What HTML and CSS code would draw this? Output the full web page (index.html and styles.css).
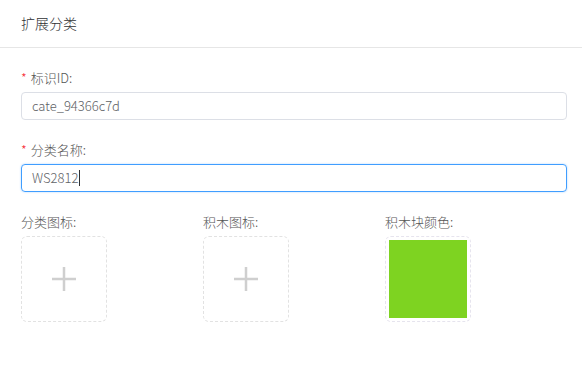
FILE: index.html
```html
<!DOCTYPE html>
<html lang="zh">
<head>
<meta charset="utf-8">
<link rel="stylesheet" href="styles.css">
</head>
<body>
<div class="panel">
  <div class="header">扩展分类</div>
  <div class="form">
    <div class="field">
      <div class="label"><span class="req">*</span>标识ID:</div>
      <div class="input">cate_94366c7d</div>
    </div>
    <div class="field">
      <div class="label"><span class="req">*</span>分类名称:</div>
      <div class="input focus">WS2812<span class="caret"></span></div>
    </div>
    <div class="uploads">
      <div class="col">
        <div class="label">分类图标:</div>
        <div class="box">
          <svg width="24" height="24" viewBox="0 0 24 24"><path d="M12 0v24M0 12h24" stroke="#cfcfcf" stroke-width="2.5" fill="none"/></svg>
        </div>
      </div>
      <div class="col">
        <div class="label">积木图标:</div>
        <div class="box">
          <svg width="24" height="24" viewBox="0 0 24 24"><path d="M12 0v24M0 12h24" stroke="#cfcfcf" stroke-width="2.5" fill="none"/></svg>
        </div>
      </div>
      <div class="col">
        <div class="label">积木块颜色:</div>
        <div class="box color"><div class="swatch"></div></div>
      </div>
    </div>
  </div>
</div>
</body>
</html>
```

FILE: styles.css
```css
* { box-sizing: border-box; }
html, body { margin: 0; padding: 0; background: #fff; }
body {
  font-family: "Noto Sans CJK SC", "Noto Sans", sans-serif;
  color: #606266;
  font-size: 13px;
  font-weight: 300;
}
.header {
  height: 48px;
  line-height: 47px;
  padding-left: 21px;
  font-size: 14px;
  color: #303133;
  border-bottom: 1px solid #e6e6e6;
}
.form {
  padding: 20px 15px 0 21px;
}
.field { margin-bottom: 20px; }
.label {
  height: 20px;
  line-height: 20px;
  margin-bottom: 4px;
  color: #555;
  font-size: 13px;
}
.req {
  color: #f5222d;
  margin-right: 4px;
}
.input {
  height: 28px;
  line-height: 26px;
  border: 1px solid #dcdfe6;
  border-radius: 4px;
  padding: 0 10px;
  color: #606266;
  display: flex;
  align-items: center;
}
.input.focus {
  border-color: #409eff;
  box-shadow: 0 0 2px rgba(64, 158, 255, 0.45);
}
.caret {
  display: inline-block;
  width: 1px;
  height: 16px;
  background: #303133;
  margin-left: 1px;
}
.uploads {
  display: grid;
  grid-template-columns: repeat(3, 1fr);
}
.box {
  width: 86px;
  height: 86px;
  border: 1px dashed #e2e2e2;
  border-radius: 6px;
  display: flex;
  align-items: center;
  justify-content: center;
}
.box.color {
  border-color: #e6e4ee;
  padding: 3px;
}
.swatch {
  width: 100%;
  height: 100%;
  background: #7ed321;
}
```
